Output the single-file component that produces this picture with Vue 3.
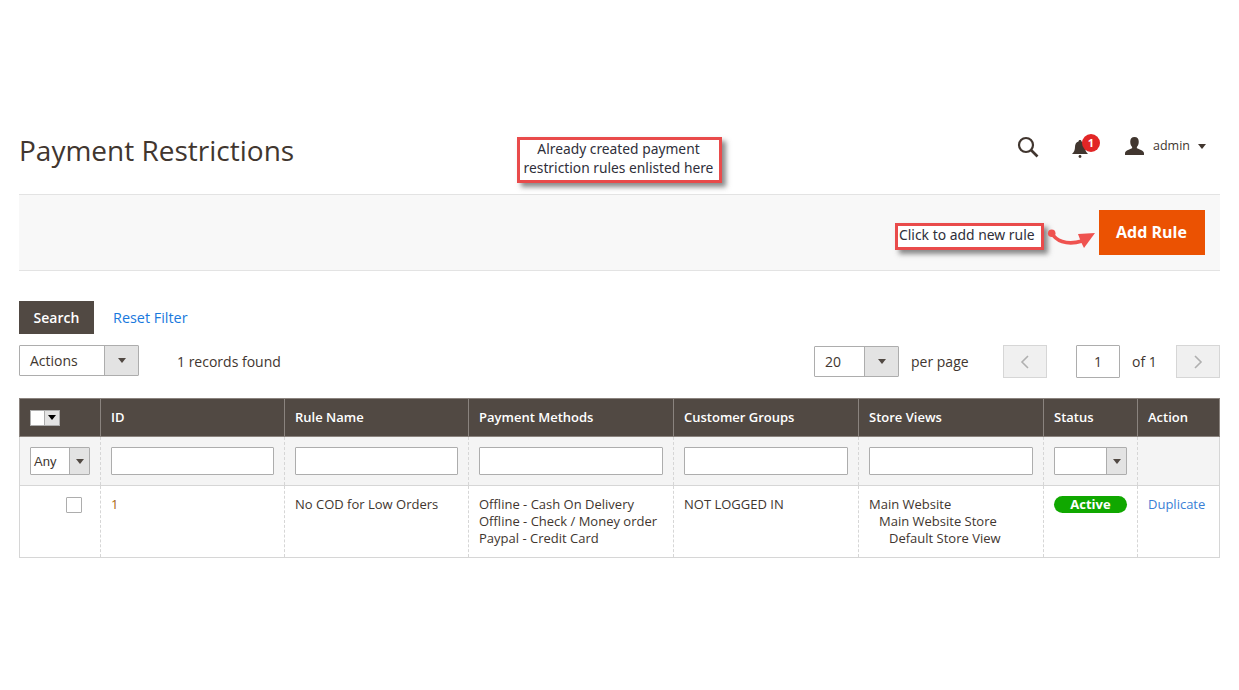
<script setup>
const columns = [
  { name: "ID", width: 184 },
  { name: "Rule Name", width: 184 },
  { name: "Payment Methods", width: 205 },
  { name: "Customer Groups", width: 185 },
  { name: "Store Views", width: 185 },
  { name: "Status", width: 94 },
  { name: "Action", width: 82 }
];
const textFilters = [0, 1, 2, 3, 4];
</script>

<template>
  <div class="page">
    <header class="page-head">
      <h1>Payment Restrictions</h1>
      <div class="head-actions">
        <svg class="search-icon" width="22" height="22" viewBox="0 0 22 22">
          <circle cx="9" cy="9" r="7" fill="none" stroke="#41362f" stroke-width="2.2" />
          <path d="M14 14l6.5 6.5" stroke="#41362f" stroke-width="2.6" />
        </svg>
        <div class="bell">
          <svg width="16" height="18" viewBox="0 0 16 18">
            <path d="M8 0c1 0 1.500.7 1.500 1.500C12 2.300 13 4.500 13 7c0 3 1 5 3 7H0c2-2 3-4 3-7 0-2.500 1-4.700 3.500-5.500C6.500.7 7 0 8 0z" fill="#41362f" />
            <circle cx="8" cy="16.500" r="1.400" fill="#41362f" />
          </svg>
          <span class="badge">1</span>
        </div>
        <div class="user">
          <svg width="19" height="18" viewBox="0 0 20 19">
            <path d="M10 0c3 0 4.500 2 4.500 5 0 2.500-1 4.500-2 5.500v1.500c2 1 7 2 7.500 5v2H0v-2c.5-3 5.500-4 7.500-5v-1.500c-1-1-2-3-2-5.500 0-3 1.500-5 4.500-5z" fill="#41362f" />
          </svg>
          <span>admin</span>
          <i class="caret"></i>
        </div>
      </div>
      <div class="note note-list">Already created payment<br />restriction rules enlisted here</div>
    </header>

    <div class="toolbar">
      <div class="note note-add">Click to add new rule</div>
      <svg class="arrow" width="50" height="28" viewBox="0 0 50 28">
        <circle cx="5.700" cy="10.300" r="3.800" fill="#ef5350" />
        <path d="M6 10C9 17 20 23 36 18" fill="none" stroke="#ef5350" stroke-width="3.500" />
        <path d="M49 10L32 11l3 8 3 6z" fill="#ef5350" />
      </svg>
      <button class="add-btn">Add Rule</button>
    </div>

    <div class="search-row">
      <button class="search-btn">Search</button>
      <a class="link reset">Reset Filter</a>
    </div>

    <div class="grid-controls">
      <div class="left-controls">
        <div class="select actions-select">
          <span class="select-val">Actions</span>
          <span class="select-btn"><i class="caret small"></i></span>
        </div>
        <span class="records">1 records found</span>
      </div>
      <div class="pager">
        <div class="select page-size">
          <span class="select-val">20</span>
          <span class="select-btn"><i class="caret small"></i></span>
        </div>
        <span class="per-page">per page</span>
        <button class="nav-btn">
          <svg width="10" height="16" viewBox="0 0 10 16"><path d="M8 2L2 8l6 6" fill="none" stroke="#b0b0b0" stroke-width="1.600" /></svg>
        </button>
        <div class="page-input">1</div>
        <span class="of">of 1</span>
        <button class="nav-btn">
          <svg width="10" height="16" viewBox="0 0 10 16"><path d="M2 2l6 6-6 6" fill="none" stroke="#b0b0b0" stroke-width="1.600" /></svg>
        </button>
      </div>
    </div>

    <table class="grid">
      <colgroup>
        <col style="width: 81px" />
        <col v-for="c in columns" :key="c.name" :style="{ width: c.width + 'px' }" />
      </colgroup>
      <thead>
        <tr>
          <th>
            <div class="mass-check">
              <span class="mass-box"></span>
              <span class="mass-btn"><i class="caret tiny"></i></span>
            </div>
          </th>
          <th v-for="c in columns" :key="c.name"><span class="th-text">{{ c.name }}</span></th>
        </tr>
        <tr class="filters">
          <td>
            <div class="select any-select">
              <span class="select-val">Any</span>
              <span class="select-btn"><i class="caret small"></i></span>
            </div>
          </td>
          <td v-for="f in textFilters" :key="f"><div class="filter-input"></div></td>
          <td>
            <div class="select status-select">
              <span class="select-val"></span>
              <span class="select-btn"><i class="caret small"></i></span>
            </div>
          </td>
          <td></td>
        </tr>
      </thead>
      <tbody>
        <tr class="row">
          <td><span class="row-check"></span></td>
          <td class="id">1</td>
          <td>No COD for Low Orders</td>
          <td>Offline - Cash On Delivery<br />Offline - Check / Money order<br />Paypal - Credit Card</td>
          <td>NOT LOGGED IN</td>
          <td>
            Main Website
            <div class="indent">Main Website Store</div>
            <div class="indent two">Default Store View</div>
          </td>
          <td><span class="pill">Active</span></td>
          <td><a class="link dup">Duplicate</a></td>
        </tr>
      </tbody>
    </table>
  </div>
</template>

<style scoped>
.page {
  width: 1201px;
  margin: 0 19px;
  padding-top: 124px;
  font-family: "Open Sans", "Noto Sans", sans-serif;
  font-size: 14px;
  color: #41362f;
}

.page-head {
  position: relative;
  height: 70px;
  display: flex;
  justify-content: space-between;
  align-items: flex-start;
}

h1 {
  margin: 3px 0 0;
  font-size: 28px;
  line-height: 46px;
  font-weight: 400;
}

.head-actions {
  display: flex;
  align-items: center;
  margin-top: 11px;
  padding-right: 14px;
  height: 24px;
}

.search-icon {
  margin-right: 33px;
}

.bell {
  position: relative;
  width: 16px;
  height: 18px;
  margin-top: 3px;
  margin-right: 37px;
}

.badge {
  position: absolute;
  top: -6px;
  left: 10px;
  width: 18px;
  height: 18px;
  border-radius: 50%;
  background: #e22626;
  color: #fff;
  font-size: 11px;
  font-weight: 700;
  line-height: 18px;
  text-align: center;
}

.user {
  display: flex;
  align-items: center;
  font-size: 12.5px;
  margin-top: -2px;
}

.user span {
  margin-left: 9px;
  margin-right: 8px;
  position: relative;
  top: -1px;
}

.caret {
  display: inline-block;
  width: 0;
  height: 0;
  border-left: 4px solid transparent;
  border-right: 4px solid transparent;
  border-top: 5px solid #41362f;
}

.caret.small {
  border-top-color: #514943;
}

.caret.tiny {
  border-top-color: #000;
}

.note {
  position: absolute;
  background: #fff;
  border: 3px solid #e94b4b;
  box-shadow: 4px 4px 5px rgba(60, 60, 60, 0.6);
  font-family: "Noto Sans", "Open Sans", sans-serif;
  font-size: 13.9px;
  line-height: 19px;
  color: #2f2f3a;
  box-sizing: border-box;
}

.note-list {
  left: 498px;
  top: 13px;
  width: 205px;
  height: 46px;
  text-align: center;
  padding-right: 2px;
  font-size: 13.800px;
  line-height: 18.500px;
  white-space: nowrap;
}

.toolbar {
  position: relative;
  height: 75px;
  background: #f8f8f8;
  border-top: 1px solid #e3e3e3;
  border-bottom: 1px solid #e3e3e3;
  display: flex;
  justify-content: flex-end;
  align-items: center;
  padding-right: 15px;
}

.note-add {
  left: 876px;
  top: 28px;
  width: 149px;
  height: 27px;
  padding-left: 1px;
  line-height: 18px;
  white-space: nowrap;
}

.arrow {
  position: absolute;
  left: 1027px;
  top: 28px;
}

.add-btn {
  width: 106px;
  height: 45px;
  border: 0;
  background: #eb5202;
  color: #fff;
  font-family: inherit;
  font-size: 16px;
  font-weight: 700;
  padding: 0 1px 2px 0;
}

.search-row {
  display: flex;
  align-items: center;
  margin-top: 30px;
}

.search-btn {
  width: 75px;
  height: 33px;
  border: 0;
  background: #514943;
  color: #fff;
  font-family: inherit;
  font-size: 14px;
  font-weight: 600;
  padding: 0;
}

.link {
  color: #1979dd;
}

.reset {
  margin-left: 19px;
  font-size: 14.400px;
}

.grid-controls {
  display: flex;
  justify-content: space-between;
  align-items: flex-start;
  margin-top: 11px;
}

.left-controls {
  display: flex;
  align-items: center;
  height: 31px;
}

.select {
  display: flex;
  box-sizing: border-box;
  border: 1px solid #adadad;
  border-radius: 1px;
  background: #fff;
}

.select-val {
  flex: 1;
  padding-left: 10px;
  color: #41362f;
}

.select-btn {
  display: flex;
  align-items: center;
  justify-content: center;
  width: 33px;
  background: #e3e3e3;
  border-left: 1px solid #adadad;
}

.actions-select {
  width: 120px;
  height: 31px;
  line-height: 29px;
}

.records {
  margin-left: 38px;
  padding-top: 2px;
}

.pager {
  display: flex;
  align-items: center;
  height: 33px;
}

.page-size {
  width: 85px;
  height: 31px;
  line-height: 29px;
}

.per-page {
  margin-left: 12px;
  width: 92px;
}

.nav-btn {
  display: flex;
  align-items: center;
  justify-content: center;
  box-sizing: border-box;
  width: 44px;
  height: 33px;
  padding: 0;
  border: 1px solid #d6d6d6;
  background: #f0f0f0;
}

.page-input {
  box-sizing: border-box;
  width: 44px;
  height: 33px;
  margin-left: 29px;
  border: 1px solid #adadad;
  border-radius: 1px;
  text-align: center;
  line-height: 31px;
}

.of {
  margin-left: 12px;
  width: 44px;
}

.grid {
  width: 1200px;
  margin-top: 20px;
  table-layout: fixed;
  border-collapse: collapse;
}

th {
  height: 37px;
  padding: 0 10px;
  background: #514943;
  border: 1px solid #8a837e;
  color: #fff;
  font-size: 13px;
  font-weight: 600;
  text-align: left;
}

.th-text {
  position: relative;
  top: -1px;
}

.mass-check {
  display: flex;
  width: 30px;
  height: 16px;
  border: 1px solid #adadad;
  background: #fff;
  box-sizing: border-box;
}

.mass-box {
  flex: 1;
}

.mass-btn {
  width: 14px;
  display: flex;
  align-items: center;
  justify-content: center;
  background: #e3e3e3;
  border-left: 1px solid #adadad;
}

.filters td {
  height: 48px;
  padding: 0 10px;
  background: #f4f4f4;
  border-left: 1px dashed #d6d6d6;
  border-right: 1px dashed #d6d6d6;
  border-bottom: 1px solid #d6d6d6;
}

.filters td:first-child {
  border-left: 1px solid #d6d6d6;
}

.filters td:last-child {
  border-right: 1px solid #d6d6d6;
}

.filter-input {
  height: 28px;
  box-sizing: border-box;
  background: #fff;
  border: 1px solid #adadad;
  border-radius: 1px;
}

.any-select {
  height: 28px;
  line-height: 28px;
  font-family: "Liberation Sans", sans-serif;
  font-size: 13px;
}

.any-select .select-val {
  padding-left: 3px;
}

.any-select .select-btn {
  width: 19px;
}

.status-select {
  height: 28px;
}

.status-select .select-btn {
  width: 19px;
}

.row td {
  height: 72px;
  padding: 10px 10px 0;
  vertical-align: top;
  box-sizing: border-box;
  font-size: 13px;
  line-height: 17px;
  border-left: 1px dashed #d6d6d6;
  border-right: 1px dashed #d6d6d6;
  border-bottom: 1px solid #d6d6d6;
}

.row td:first-child {
  border-left: 1px solid #d6d6d6;
  text-align: right;
  padding-right: 18px;
}

.row td:last-child {
  border-right: 1px solid #d6d6d6;
}

.row-check {
  display: inline-block;
  box-sizing: border-box;
  width: 16px;
  height: 16px;
  margin-top: 1px;
  border: 1px solid #adadad;
  border-radius: 1px;
  background: #fff;
}

.id {
  color: #a9670f;
}

.indent {
  padding-left: 10px;
}

.indent.two {
  padding-left: 20px;
}

.pill {
  display: block;
  height: 17px;
  border-radius: 9px;
  background: #10a800;
  color: #fff;
  font-weight: 700;
  font-size: 13px;
  line-height: 17px;
  text-align: center;
}

.dup {
  color: #3a7fd5;
}
</style>
